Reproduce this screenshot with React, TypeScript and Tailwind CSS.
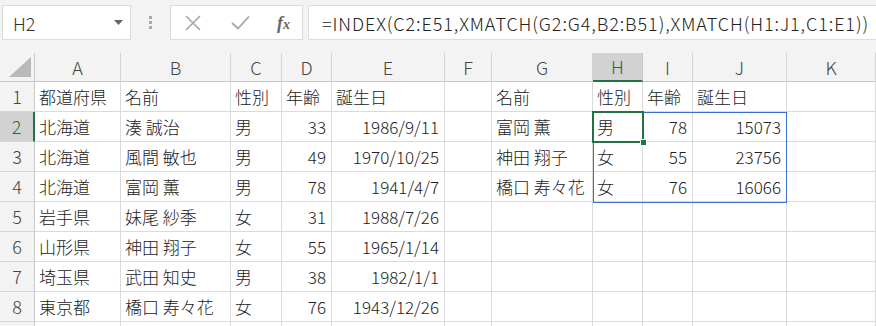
import React from "react";

const COLS = ["A", "B", "C", "D", "E", "F", "G", "H", "I", "J", "K"];
type Cell = { v: string; r?: boolean };
const t = (v: string): Cell => ({ v });
const n = (v: string): Cell => ({ v, r: true });
const e: Cell = { v: "" };

const ROWS: Cell[][] = [
  [t("都道府県"), t("名前"), t("性別"), t("年齢"), t("誕生日"), e, t("名前"), t("性別"), t("年齢"), t("誕生日"), e],
  [t("北海道"), t("湊 誠治"), t("男"), n("33"), n("1986/9/11"), e, t("富岡 薫"), t("男"), n("78"), n("15073"), e],
  [t("北海道"), t("風間 敏也"), t("男"), n("49"), n("1970/10/25"), e, t("神田 翔子"), t("女"), n("55"), n("23756"), e],
  [t("北海道"), t("富岡 薫"), t("男"), n("78"), n("1941/4/7"), e, t("橋口 寿々花"), t("女"), n("76"), n("16066"), e],
  [t("岩手県"), t("妹尾 紗季"), t("女"), n("31"), n("1988/7/26"), e, e, e, e, e, e],
  [t("山形県"), t("神田 翔子"), t("女"), n("55"), n("1965/1/14"), e, e, e, e, e, e],
  [t("埼玉県"), t("武田 知史"), t("男"), n("38"), n("1982/1/1"), e, e, e, e, e, e],
  [t("東京都"), t("橋口 寿々花"), t("女"), n("76"), n("1943/12/26"), e, e, e, e, e, e],
  [e, e, e, e, e, e, e, e, e, e, e],
];

const font = { fontFamily: '"Noto Sans CJK JP", "Noto Sans", sans-serif' };

export default function App() {
  return (
    <div className="w-[876px] h-[326px] overflow-hidden bg-white text-[#222] font-light" style={font}>
      {/* top bar */}
      <div className="h-[53px] bg-[#f3f3f3] flex items-start pt-[5px] pl-[2px]">
        <div className="w-[129px] h-[35px] bg-white border border-[#dcdcdc] flex items-center justify-between pl-[10px] pr-[7px]">
          <span className="text-[18px] text-[#333] leading-none">H2</span>
          <svg width="9" height="5" viewBox="0 0 9 5"><path d="M0 0 L9 0 L4.5 5 Z" fill="#666" /></svg>
        </div>
        <div className="w-[39px] h-[35px] flex flex-col items-center justify-center gap-[2px]">
          <span className="w-[3px] h-[3px] bg-[#a8a8a8]" />
          <span className="w-[3px] h-[3px] bg-[#a8a8a8]" />
          <span className="w-[3px] h-[3px] bg-[#a8a8a8]" />
        </div>
        <div className="w-[133px] h-[35px] bg-white border border-[#dcdcdc] flex items-center">
          <svg className="ml-[14px]" width="16" height="16" viewBox="0 0 16 16">
            <path d="M1 1 L15 15 M15 1 L1 15" stroke="#a6a6a6" strokeWidth="1.6" fill="none" />
          </svg>
          <svg className="ml-[30px]" width="19" height="15" viewBox="0 0 19 15">
            <path d="M1 8 L7 13.5 L18 1.5" stroke="#a6a6a6" strokeWidth="1.8" fill="none" />
          </svg>
          <span className="ml-[27px] text-[18px] italic font-bold text-[#666] leading-none" style={{ fontFamily: '"Liberation Serif", serif' }}>
            f<span className="text-[14px]">x</span>
          </span>
        </div>
        <div className="ml-[5px] flex-1 h-[35px] bg-white border border-[#dcdcdc] border-r-0 flex items-center pl-[13px]">
          <span className="text-[18px] tracking-[0.9px] text-[#222] whitespace-nowrap leading-none">
            =INDEX(C2:E51,XMATCH(G2:G4,B2:B51),XMATCH(H1:J1,C1:E1))
          </span>
        </div>
      </div>

      {/* grid */}
      <div className="relative grid grid-cols-[35px_86px_110px_51px_50px_113px_47px_101px_50px_50px_94px_89px]">
        {/* corner */}
        <div className="h-[29px] bg-[#f3f3f3] border-r border-b border-[#c8c8c8] relative">
          <svg className="absolute right-[3px] bottom-[4px]" width="22" height="20" viewBox="0 0 22 20">
            <path d="M22 0 L22 20 L0 20 Z" fill="#b9b9b9" />
          </svg>
        </div>
        {COLS.map((c) => (
          <div
            key={c}
            className={
              c === "H"
                ? "h-[29px] bg-[#d2d2d2] border-r border-[#c8c8c8] border-b-2 border-b-[#217346] flex items-center justify-center text-[18px] text-[#1e6b41]"
                : "h-[29px] bg-[#f3f3f3] border-r border-b border-[#d4d4d4] border-b-[#c8c8c8] flex items-center justify-center text-[18px] text-[#444]"
            }
          >
            {c}
          </div>
        ))}
        {ROWS.map((row, i) => (
          <React.Fragment key={i}>
            <div
              className={
                i === 1
                  ? "h-[30px] bg-[#d2d2d2] border-b border-[#d4d4d4] border-r-2 border-r-[#217346] flex items-center justify-center text-[18px] text-[#1e6b41]"
                  : "h-[30px] bg-[#f3f3f3] border-b border-r border-[#d4d4d4] border-r-[#c8c8c8] flex items-center justify-center text-[18px] text-[#444]"
              }
            >
              {i < 8 ? i + 1 : ""}
            </div>
            {row.map((cell, j) => (
              <div
                key={j}
                className={
                  cell.r
                    ? "h-[30px] border-r border-b border-[#dadada] flex items-center justify-end pr-[5px] text-[17px] whitespace-nowrap"
                    : "h-[30px] border-r border-b border-[#dadada] flex items-center pl-[4px] text-[17px] whitespace-nowrap"
                }
              >
                {cell.v}
              </div>
            ))}
          </React.Fragment>
        ))}
        {/* spill range border */}
        <div className="absolute left-[593px] top-[59px] w-[194px] h-[91px] border border-[#3a6fd0] pointer-events-none" />
        {/* active cell */}
        <div className="absolute left-[592px] top-[58px] w-[52px] h-[32px] border-2 border-[#217346] pointer-events-none" />
        <div className="absolute left-[640px] top-[86px] w-[7px] h-[7px] bg-[#217346] border border-white pointer-events-none" />
      </div>
    </div>
  );
}
